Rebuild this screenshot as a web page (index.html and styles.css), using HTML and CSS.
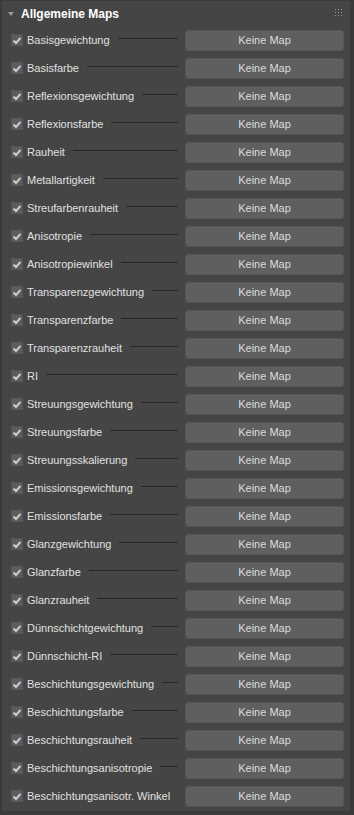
FILE: index.html
```html
<!DOCTYPE html>
<html lang="de">
<head>
    <meta charset="UTF-8">
    <meta name="viewport" content="width=device-width, initial-scale=1.0">
    <title>Allgemeine Maps</title>
    <link rel="stylesheet" href="styles.css">
</head>
<body>
    <div class="panel">
        <div class="header">
            <span class="arrow"></span>
            <span class="title">Allgemeine Maps</span>
            <svg class="grip" width="7" height="7" viewBox="0 0 7 7">
                <rect x="0" y="0" width="1" height="1"/><rect x="3" y="0" width="1" height="1"/><rect x="6" y="0" width="1" height="1"/>
                <rect x="0" y="3" width="1" height="1"/><rect x="3" y="3" width="1" height="1"/><rect x="6" y="3" width="1" height="1"/>
                <rect x="0" y="6" width="1" height="1"/><rect x="3" y="6" width="1" height="1"/><rect x="6" y="6" width="1" height="1"/>
            </svg>
        </div>

        <div class="rows" id="rows"></div>
    </div>

    <script>
        const names = [
            'Basisgewichtung', 'Basisfarbe', 'Reflexionsgewichtung', 'Reflexionsfarbe',
            'Rauheit', 'Metallartigkeit', 'Streufarbenrauheit', 'Anisotropie',
            'Anisotropiewinkel', 'Transparenzgewichtung', 'Transparenzfarbe', 'Transparenzrauheit',
            'RI', 'Streuungsgewichtung', 'Streuungsfarbe', 'Streuungsskalierung',
            'Emissionsgewichtung', 'Emissionsfarbe', 'Glanzgewichtung', 'Glanzfarbe',
            'Glanzrauheit', 'Dünnschichtgewichtung', 'Dünnschicht-RI', 'Beschichtungsgewichtung',
            'Beschichtungsfarbe', 'Beschichtungsrauheit', 'Beschichtungsanisotropie', 'Beschichtungsanisotr. Winkel'
        ];

        const rows = document.getElementById('rows');
        names.forEach(name => {
            const row = document.createElement('div');
            row.className = 'row';
            row.innerHTML = `
                <label class="check">
                    <span class="box">
                        <svg width="10" height="9" viewBox="0 0 10 9"><path d="M1.5 4.5 L4 7 L8.5 1.8" /></svg>
                    </span>
                    <span class="name">${name}</span>
                    <span class="line"></span>
                </label>
                <button class="map">Keine Map</button>
            `;
            rows.appendChild(row);
        });
    </script>
</body>
</html>
```

FILE: styles.css
```css
body {
    margin: 0;
    background-color: #3b3b3b;
    font-family: "Liberation Sans", Arial, sans-serif;
}

.panel {
    width: 350px;
    height: 812px;
    margin-left: 1px;
    background-color: #454545;
    border: 1px solid #393939;
    border-radius: 2px;
    box-sizing: border-box;
}

.header {
    display: flex;
    align-items: center;
    height: 25px;
    padding: 0 8px 0 6px;
}

.arrow {
    width: 0;
    height: 0;
    border-left: 3px solid transparent;
    border-right: 3px solid transparent;
    border-top: 4px solid #9a9a9a;
    margin-right: 7px;
    margin-top: 1px;
}

.title {
    flex: 1;
    color: #ffffff;
    font-weight: bold;
    font-size: 12px;
}

.grip {
    fill: #9a9a9a;
    margin-top: -2px;
}

.row {
    display: flex;
    align-items: center;
    height: 28px;
    padding: 0 6px 0 9px;
}

.check {
    flex: 1;
    display: flex;
    align-items: center;
    min-width: 0;
}

.box {
    width: 12px;
    height: 12px;
    background-color: #5c5c5c;
    border: 1px solid #555555;
    box-sizing: border-box;
    display: flex;
    align-items: center;
    justify-content: center;
    margin-right: 4px;
}

.box svg {
    fill: none;
    stroke: #cfcfcf;
    stroke-width: 2;
}

.name {
    color: #e0e0e0;
    font-size: 11px;
    white-space: nowrap;
}

.line {
    flex: 1;
    height: 1px;
    background-color: #262626;
    margin: 0 7px 0 8px;
    position: relative;
    top: -2px;
}

.map {
    width: 159px;
    height: 21px;
    background-color: #5f5f5f;
    color: #dcdcdc;
    border: 1px solid #555555;
    border-radius: 3px;
    font-family: "Liberation Sans", Arial, sans-serif;
    font-size: 11px;
    padding: 0;
}
```
